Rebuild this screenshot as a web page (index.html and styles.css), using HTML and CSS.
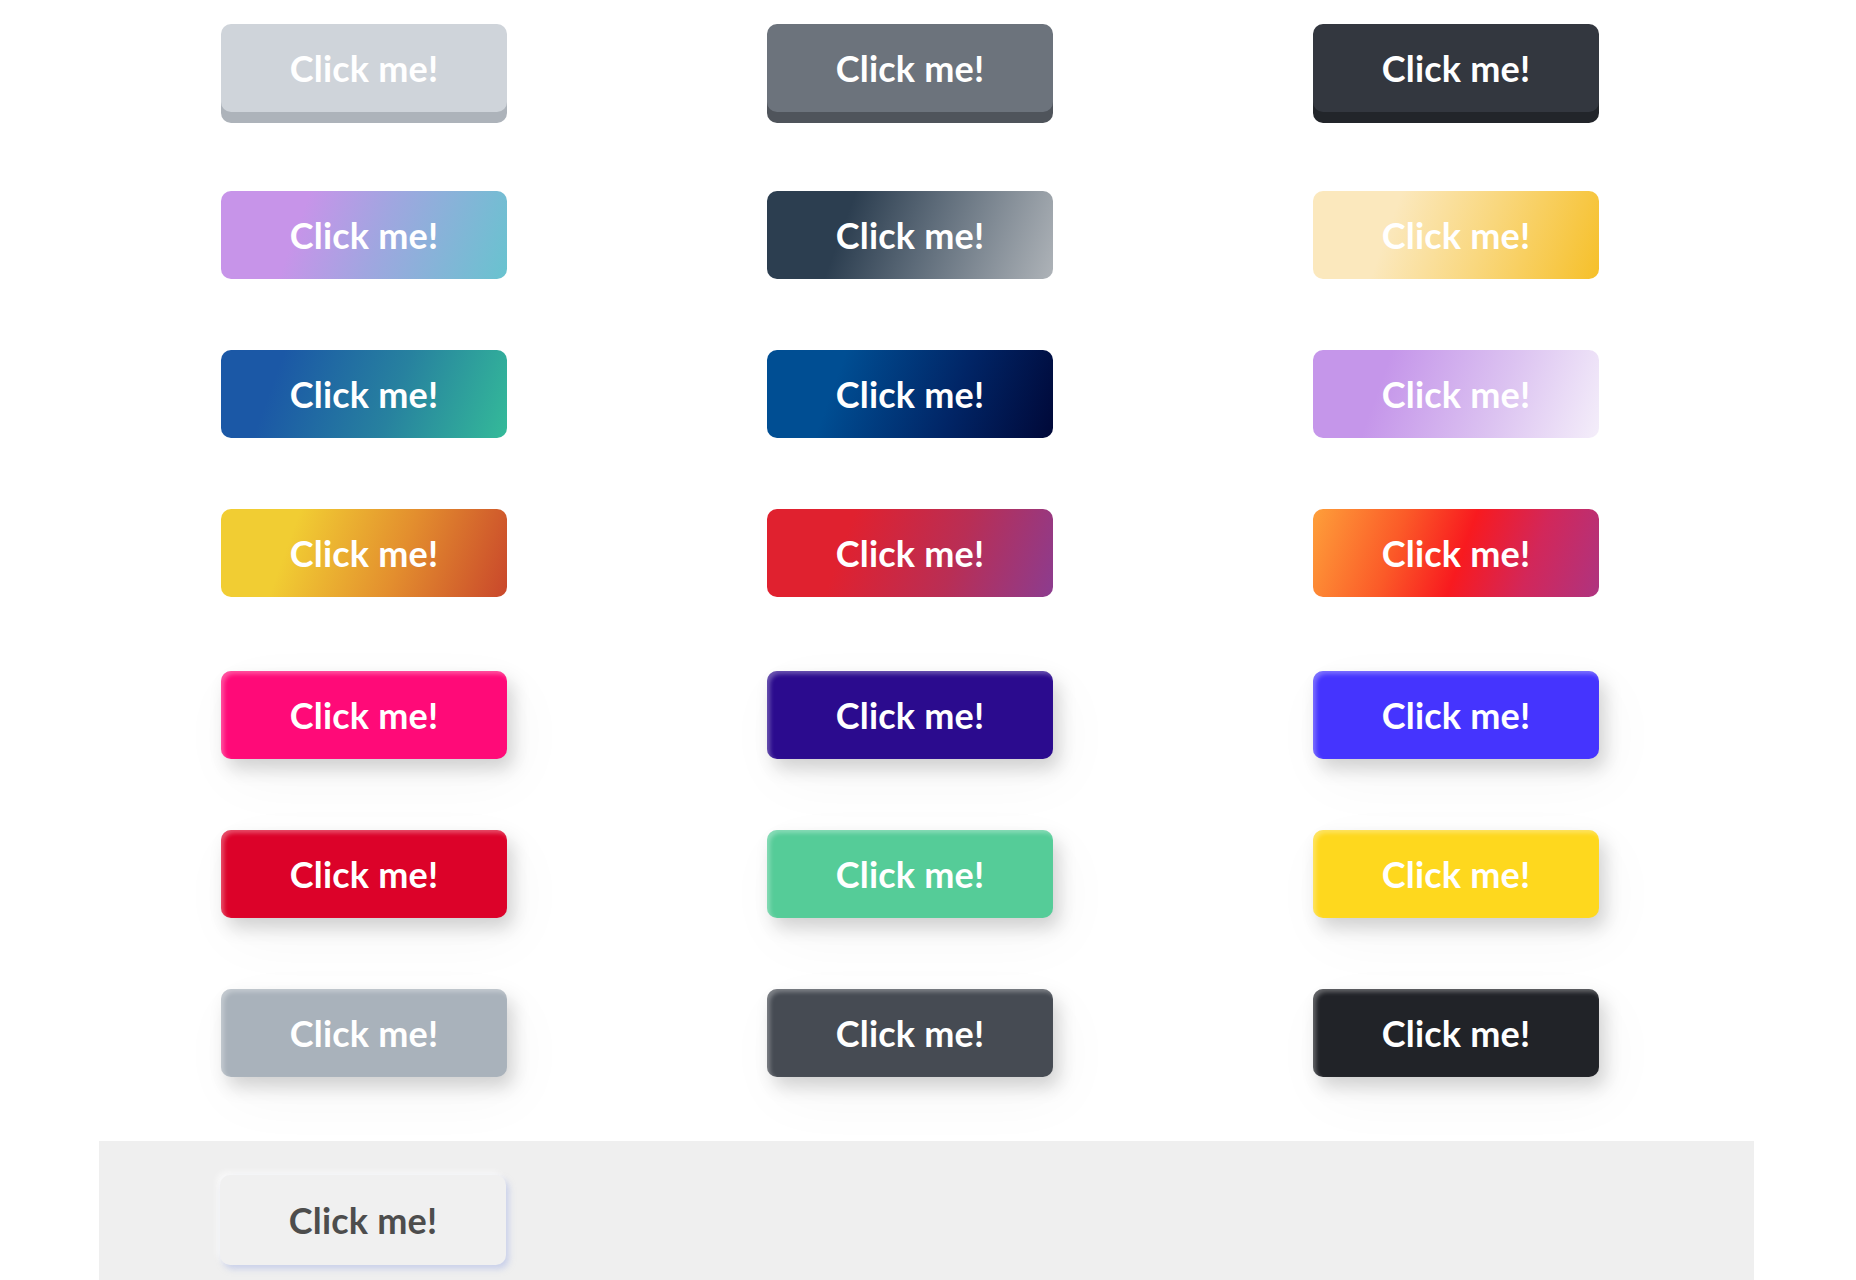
FILE: index.html
```html
<!DOCTYPE html>
<html lang="en">
<head>
    <meta charset="UTF-8">
    <meta name="viewport" content="width=device-width, initial-scale=1.0">
    <title>Buttons</title>
    <link rel="stylesheet" href="styles.css">
</head>
<body>
    <div class="page">
        <div class="grid grid-3d">
            <button class="btn btn-3d light">Click me!</button>
            <button class="btn btn-3d gray">Click me!</button>
            <button class="btn btn-3d dark">Click me!</button>
        </div>

        <div class="grid grid-gradient">
            <button class="btn g-lavender">Click me!</button>
            <button class="btn g-slate">Click me!</button>
            <button class="btn g-cream">Click me!</button>
            <button class="btn g-ocean">Click me!</button>
            <button class="btn g-navy">Click me!</button>
            <button class="btn g-lilac">Click me!</button>
            <button class="btn g-sunset">Click me!</button>
            <button class="btn g-berry">Click me!</button>
            <button class="btn g-fire">Click me!</button>
        </div>

        <div class="grid grid-raised">
            <button class="btn raised pink">Click me!</button>
            <button class="btn raised indigo">Click me!</button>
            <button class="btn raised blue">Click me!</button>
            <button class="btn raised red">Click me!</button>
            <button class="btn raised green">Click me!</button>
            <button class="btn raised yellow">Click me!</button>
            <button class="btn raised silver">Click me!</button>
            <button class="btn raised charcoal">Click me!</button>
            <button class="btn raised black">Click me!</button>
        </div>

        <div class="soft-section">
            <button class="btn soft">Click me!</button>
        </div>
    </div>
</body>
</html>
```

FILE: styles.css
```css
body {
    margin: 0;
    background-color: #ffffff;
    font-family: Lato, "Open Sans", sans-serif;
}
.page {
    width: 1655px;
    margin-left: 99px;
}
.grid {
    display: grid;
    grid-template-columns: repeat(3, 546px);
    row-gap: 71px;
    padding-left: 122px;
}
.grid-3d {
    padding-top: 24px;
}
.grid-gradient {
    margin-top: 79px;
}
.grid-raised {
    margin-top: 74px;
}
.btn {
    width: 286px;
    height: 88px;
    border: none;
    border-radius: 10px;
    color: #ffffff;
    font-family: Lato, "Open Sans", sans-serif;
    font-weight: bold;
    font-size: 36px;
    letter-spacing: 0.2px;
    cursor: pointer;
    padding: 0;
}

/* 3d buttons: the edge is a hard shadow under the face */
.btn-3d.light {
    background-color: #cfd4da;
    box-shadow: 0 11px 0 #adb3ba;
}
.btn-3d.gray {
    background-color: #6c737c;
    box-shadow: 0 11px 0 #4f545b;
}
.btn-3d.dark {
    background-color: #33373f;
    box-shadow: 0 11px 0 #22252a;
}

/* gradient buttons */
.g-lavender {
    background: linear-gradient(110deg, #c794e9 28%, #a0a6e0 55%, #68c3cf 100%);
}
.g-slate {
    background: linear-gradient(110deg, #2c3e50 28%, #5d6b79 55%, #aeb3b8 100%);
}
.g-cream {
    background: linear-gradient(110deg, #fbe8bd 28%, #f9d77d 60%, #f6c02a 100%);
}
.g-ocean {
    background: linear-gradient(110deg, #1b58a6 20%, #27819f 60%, #34ba99 100%);
}
.g-navy {
    background: linear-gradient(110deg, #004e93 25%, #012566 65%, #000838 100%);
}
.g-lilac {
    background: linear-gradient(110deg, #c596ea 25%, #dcc3f1 65%, #f4eefa 100%);
}
.g-sunset {
    background: linear-gradient(110deg, #f1cd33 25%, #e38e2e 62%, #c9472b 100%);
}
.g-berry {
    background: linear-gradient(110deg, #e0212f 28%, #b92e55 65%, #8c3c8f 100%);
}
.g-fire {
    background: linear-gradient(110deg, #fe9f3a 0%, #fb5a28 30%, #f81a1f 52%, #d2275a 75%, #ae3480 100%);
}

/* raised buttons */
.raised {
    box-shadow: inset 3px 3px 4px rgba(255, 255, 255, 0.3),
                6px 10px 18px rgba(0, 0, 0, 0.16),
                10px 20px 60px rgba(0, 0, 0, 0.04);
}
.pink { background-color: #ff0a78; }
.indigo { background-color: #2b0b8e; }
.blue { background-color: #4534fe; }
.red { background-color: #dc0229; }
.green { background-color: #55cc98; }
.yellow { background-color: #fed81e; }
.silver { background-color: #a9b2bb; }
.charcoal { background-color: #464b53; }
.black { background-color: #212328; }

/* soft section */
.soft-section {
    margin-top: 64px;
    background-color: #efefef;
    padding: 34px 0 60px 121px;
}
.btn.soft {
    height: 90px;
    background-color: #f0f0f0;
    color: #4d4d4d;
    box-shadow: 3px 4px 6px rgba(170, 182, 230, 0.55),
                -3px -3px 6px rgba(255, 255, 255, 0.7);
}
```
